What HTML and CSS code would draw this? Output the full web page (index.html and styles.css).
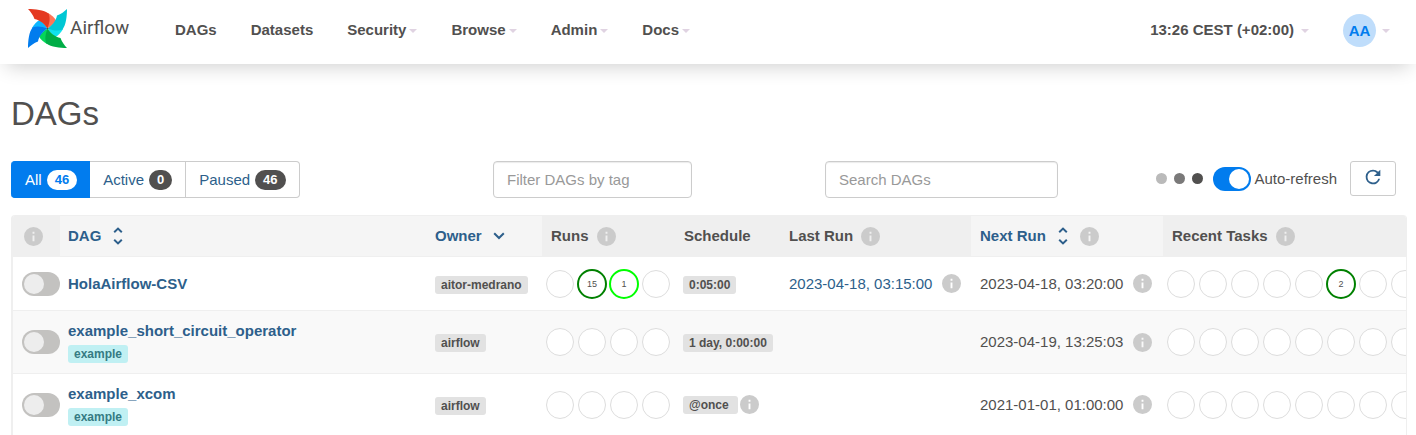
FILE: index.html
```html
<!DOCTYPE html>
<html lang="en">
<head>
<meta charset="utf-8">
<meta name="viewport" content="width=device-width, initial-scale=1">
<title>DAGs - Airflow</title>
<link rel="stylesheet" href="styles.css">
</head>
<body>
<svg class="sprite" aria-hidden="true">
  <symbol id="info" viewBox="0 0 20 20"><path fill-rule="evenodd" d="M10 0a10 10 0 1 0 0 20a10 10 0 1 0 0-20zM9 5h2v2H9zM9 9h2v6H9z"/></symbol>
  <symbol id="sort" viewBox="0 0 10 18"><path d="M1.2 5.2L5 1.6L8.800 5.200M1.2 12.8L5 16.400L8.800 12.800"/></symbol>
  <symbol id="chevron" viewBox="0 0 12 18"><path d="M1.200 6.200L6 11L10.800 6.200"/></symbol>
  <path id="blade" d="M0 0C7 0 16 1 20.500 4.500C22.500 9 21.500 14 19.500 19.500C16 14.500 12 11 6.500 10C5 6 2.500 2.500 0 0z"/>
  <path id="lobe" d="M20 4C23 5.500 26.500 8.500 28 11.500C26.500 14.500 23 17.500 19.500 19.500z"/>
</svg>

<header class="navbar">
  <a class="brand" href="#">
    <svg class="pinwheel" viewBox="0 0 39 39" aria-hidden="true">
      <use href="#lobe" fill="#ff7557"/>
      <use href="#lobe" fill="#11e1ee" transform="rotate(90 19.5 19.5)"/>
      <use href="#lobe" fill="#04d659" transform="rotate(180 19.5 19.5)"/>
      <use href="#lobe" fill="#0cb6ff" transform="rotate(270 19.5 19.5)"/>
      <use href="#blade" fill="#e43921"/>
      <use href="#blade" fill="#00c7d4" transform="rotate(90 19.5 19.5)"/>
      <use href="#blade" fill="#00ad46" transform="rotate(180 19.5 19.5)"/>
      <use href="#blade" fill="#017cee" transform="rotate(270 19.5 19.5)"/>
      <circle cx="19.5" cy="19.5" r="0.8" fill="#51504f"/>
    </svg>
    <span>Airflow</span>
  </a>
  <nav class="menu">
    <a href="#">DAGs</a>
    <a href="#">Datasets</a>
    <a href="#">Security<i class="caret"></i></a>
    <a href="#">Browse<i class="caret"></i></a>
    <a href="#">Admin<i class="caret"></i></a>
    <a href="#">Docs<i class="caret"></i></a>
  </nav>
  <div class="account">
    <a class="clock" href="#">13:26 CEST (+02:00)<i class="caret"></i></a>
    <a class="user" href="#"><span class="avatar">AA</span><i class="caret"></i></a>
  </div>
</header>

<main class="page">
  <h1>DAGs</h1>

  <div class="filters">
    <div class="status">
      <a class="current" href="#">All <span class="count">46</span></a>
      <a href="#">Active <span class="count">0</span></a>
      <a href="#">Paused <span class="count">46</span></a>
    </div>
    <div><input class="field tags" type="text" placeholder="Filter DAGs by tag" aria-label="Filter DAGs by tag"></div>
    <div class="tools">
      <input class="field search" type="search" placeholder="Search DAGs" aria-label="Search DAGs">
      <div class="refresh">
        <span class="loading"><i></i><i></i><i></i></span>
        <label class="auto"><input class="switch" type="checkbox" checked>Auto-refresh</label>
        <button class="reload" type="button" aria-label="Refresh">
          <svg viewBox="0 0 24 24" aria-hidden="true"><path d="M17.650 6.350A7.958 7.958 0 0 0 12 4a8 8 0 1 0 7.730 10h-2.080A6 6 0 1 1 12 6c1.660 0 3.140.69 4.220 1.780L13 11h7V4z"/></svg>
        </button>
      </div>
    </div>
  </div>

  <div class="table-wrap">
    <table>
      <colgroup>
        <col class="c-toggle"><col><col class="c-owner"><col class="c-runs"><col class="c-schedule"><col class="c-last"><col class="c-next"><col class="c-tasks">
      </colgroup>
      <thead>
        <tr>
          <th class="pause" scope="col"><svg class="info" role="img" aria-label="Pause or unpause"><use href="#info"/></svg></th>
          <th class="sortable" scope="col"><a class="line" href="#">DAG<svg class="sort"><use href="#sort"/></svg></a></th>
          <th class="sortable" scope="col"><a class="line" href="#">Owner<svg class="chevron"><use href="#chevron"/></svg></a></th>
          <th scope="col"><span class="line inset">Runs<svg class="info"><use href="#info"/></svg></span></th>
          <th scope="col"><span class="line inset">Schedule</span></th>
          <th scope="col"><span class="line">Last Run<svg class="info"><use href="#info"/></svg></span></th>
          <th class="sortable" scope="col"><span class="line inset"><a class="line" href="#">Next Run<svg class="sort"><use href="#sort"/></svg></a><svg class="info after-sort"><use href="#info"/></svg></span></th>
          <th scope="col"><span class="line inset">Recent Tasks<svg class="info"><use href="#info"/></svg></span></th>
        </tr>
      </thead>
      <tbody>
        <tr>
          <td class="pause"><input class="switch" type="checkbox" aria-label="HolaAirflow-CSV active"></td>
          <td><a class="dag" href="#">HolaAirflow-CSV</a></td>
          <td><a class="label" href="#">aitor-medrano</a></td>
          <td class="circles"><ul><li></li><li class="success">15</li><li class="running">1</li><li></li></ul></td>
          <td><a class="label" href="#">0:05:00</a></td>
          <td><span class="line"><a href="#">2023-04-18, 03:15:00</a><svg class="info"><use href="#info"/></svg></span></td>
          <td><span class="line inset">2023-04-18, 03:20:00<svg class="info"><use href="#info"/></svg></span></td>
          <td class="circles"><ul><li></li><li></li><li></li><li></li><li></li><li class="success">2</li><li></li><li></li></ul></td>
        </tr>
        <tr>
          <td class="pause"><input class="switch" type="checkbox" aria-label="example_short_circuit_operator active"></td>
          <td><a class="dag" href="#">example_short_circuit_operator</a><a class="label tag" href="#">example</a></td>
          <td><a class="label" href="#">airflow</a></td>
          <td class="circles"><ul><li></li><li></li><li></li><li></li></ul></td>
          <td><a class="label" href="#">1 day, 0:00:00</a></td>
          <td></td>
          <td><span class="line inset">2023-04-19, 13:25:03<svg class="info"><use href="#info"/></svg></span></td>
          <td class="circles"><ul><li></li><li></li><li></li><li></li><li></li><li></li><li></li><li></li></ul></td>
        </tr>
        <tr>
          <td class="pause"><input class="switch" type="checkbox" aria-label="example_xcom active"></td>
          <td><a class="dag" href="#">example_xcom</a><a class="label tag" href="#">example</a></td>
          <td><a class="label" href="#">airflow</a></td>
          <td class="circles"><ul><li></li><li></li><li></li><li></li></ul></td>
          <td><span class="line"><a class="label once" href="#">@once</a><svg class="info tight"><use href="#info"/></svg></span></td>
          <td></td>
          <td><span class="line inset">2021-01-01, 01:00:00<svg class="info"><use href="#info"/></svg></span></td>
          <td class="circles"><ul><li></li><li></li><li></li><li></li><li></li><li></li><li></li><li></li></ul></td>
        </tr>
      </tbody>
    </table>
  </div>
</main>
</body>
</html>
```
FILE: styles.css
```css
* { box-sizing: border-box; }

body {
  margin: 0;
  background: #fff;
  color: #51504f;
  font: 15px/20px "Liberation Sans", Arial, sans-serif;
}

a { color: #2d5f8b; text-decoration: none; }
.sprite { position: absolute; width: 0; height: 0; }

/* Navigation */
.navbar {
  display: flex;
  align-items: center;
  height: 64px;
  padding: 0 26px 4px 28px;
  background: #fff;
  box-shadow: 0 8px 20px -6px rgba(0, 0, 0, 0.2);
}
.navbar a { color: #51504f; }
.brand {
  display: flex;
  align-items: center;
  gap: 3px;
  width: 147px;
  padding-bottom: 4px;
  font: 19px/24px Roboto, sans-serif;
}
.pinwheel { width: 39px; height: 39px; }
.menu { display: flex; gap: 34px; font-weight: bold; }
.menu a, .clock, .user { display: flex; align-items: center; }
.caret {
  margin: 2px 0 0 3px;
  border: 4px solid transparent;
  border-top-color: #e0d3e2;
  border-bottom: 0;
}
.account { display: flex; align-items: center; gap: 34px; margin-left: auto; font-weight: bold; }
.clock { gap: 4px; }
.user { gap: 3px; }
.avatar {
  width: 33px;
  height: 33px;
  border-radius: 50%;
  background: #bfddfb;
  line-height: 33px;
  text-align: center;
}
.navbar .avatar { color: #017cee; }

/* Page head and filters */
.page { padding: 0 9px 0 11px; }
h1 { margin: 0; padding: 30px 0 28px; font-size: 33px; font-weight: normal; line-height: 39px; }
.filters {
  display: grid;
  grid-template-columns: 482fr 332fr 582fr;
  align-items: start;
  height: 54px;
}
.status { display: flex; }
.status a {
  display: flex;
  align-items: center;
  gap: 5px;
  height: 37px;
  padding: 0 13px;
  border: 1px solid #ccc;
  border-left-width: 0;
}
.status a:last-child { border-radius: 0 4px 4px 0; }
.status .current {
  padding: 0 12px 0 14px;
  border-color: #017cee;
  border-radius: 4px 0 0 4px;
  background: #017cee;
  color: #fff;
}
.count {
  padding: 0 8px;
  border-radius: 10px;
  background: #51504f;
  color: #fff;
  font-size: 13px;
  font-weight: bold;
}
.current .count { background: #fff; color: #017cee; }
.field {
  height: 37px;
  padding: 0 13px;
  border: 1px solid #ccc;
  border-radius: 4px;
  background: #fff;
  box-shadow: inset 0 1px 1px rgba(0, 0, 0, 0.08);
  color: #51504f;
  font: inherit;
  appearance: none;
}
.field::placeholder { color: #999; opacity: 1; }
.tags { width: 199px; }
.search { width: 233px; }
.tools { display: flex; justify-content: space-between; padding-right: 11px; }
.refresh { display: flex; align-items: center; height: 35px; }
.loading { display: flex; gap: 7px; margin-right: 10px; }
.loading i { width: 11px; height: 11px; border-radius: 50%; background: #bababa; }
.loading i:nth-child(2) { background: #7a7979; }
.loading i:nth-child(3) { background: #51504f; }
.auto { display: flex; align-items: center; gap: 3px; }
.reload {
  display: grid;
  place-items: center;
  width: 46px;
  height: 35px;
  margin-left: 13px;
  padding: 0 0 3px;
  border: 1px solid #ccc;
  border-radius: 3px;
  background: #fff;
}
.reload svg { width: 22px; height: 22px; fill: #2d5f8b; }

.switch {
  display: block;
  width: 38px;
  height: 24px;
  margin: 0;
  padding: 2px;
  border-radius: 12px;
  background: #c3c2c0;
  appearance: none;
}
.switch::before {
  content: "";
  display: block;
  width: 20px;
  height: 20px;
  border-radius: 50%;
  background: #ededed;
}
.switch:checked { background: #017cee; }
.switch:checked::before { margin-left: auto; background: #fff; }

/* DAG table */
.table-wrap {
  overflow: hidden;
  border: 1px solid #efefef;
  border-width: 0 1px 0 2px;
  border-radius: 4px 4px 0 0;
}
table { width: 100%; border-collapse: collapse; table-layout: fixed; }
.c-toggle { width: 47px; }
.c-owner { width: 115px; }
.c-runs { width: 133px; }
.c-schedule { width: 106px; }
.c-last { width: 190px; }
.c-next { width: 192px; }
.c-tasks { width: 243px; }
th, td { padding: 0 8px; text-align: left; vertical-align: middle; white-space: nowrap; }
th { height: 41px; border: solid #efefef; border-width: 1px 0; background: #efefef; }
th.sortable { background: #f5f5f5; }
td { height: 54px; border-bottom: 1px solid #efefef; }
tbody tr:nth-child(even) { background: #f9f9f9; }
tbody tr + tr td { height: 63px; }
tbody tr:last-child td { height: 62px; border-bottom: 0; }
th.pause { padding-left: 11px; }
td.pause { padding: 0 0 0 9px; }

.line { display: flex; align-items: center; }
.inset { padding-left: 1px; }
.info { flex: none; width: 19px; height: 19px; margin-left: 8px; fill: #cbcbcb; }
td .info { margin-left: 10px; }
.pause .info { display: block; margin: 0; }
.info.after-sort { margin-left: 12px; }
.info.tight { margin-left: 2px; }
.sort, .chevron { height: 18px; fill: none; stroke: #2d5f8b; stroke-width: 2; }
.sort { width: 10px; margin-left: 12px; }
.chevron { width: 12px; margin-left: 11px; }

.dag { display: block; font-weight: bold; }
.label {
  display: inline-block;
  padding: 0 6px;
  border-radius: 3px;
  background: #e2e2e2;
  color: #51504f;
  font-size: 12px;
  font-weight: bold;
  line-height: 18px;
  vertical-align: middle;
}
.once { padding-right: 9px; }
.tag { margin-top: 4px; background: #c0f0f3; color: #357b83; }

.circles { padding: 0 0 0 4px; overflow: hidden; }
.circles ul { display: flex; gap: 4px; margin: 0; padding: 0; list-style: none; }
.circles li {
  flex: none;
  width: 28px;
  height: 28px;
  border: 1px solid #ddd;
  border-radius: 50%;
  background: #fff;
  font-size: 9px;
  line-height: 26px;
  text-align: center;
}
.circles .success, .circles .running { width: 30px; height: 30px; margin: -1px; border-width: 2px; }
.circles .success { border-color: #008000; }
.circles .running { border-color: #00ff00; }
```
